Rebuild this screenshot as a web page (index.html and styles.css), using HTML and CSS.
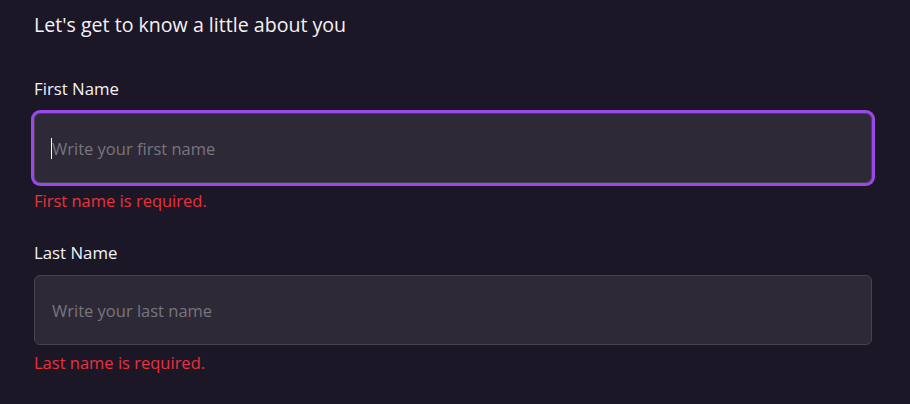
FILE: index.html
```
<!DOCTYPE html>
<html lang="en">
<head>
<meta charset="utf-8">
<title>About you</title>
<link rel="stylesheet" href="styles.css">
</head>
<body>
<form class="form">
  <h2 class="title">Let's get to know a little about you</h2>
  <div class="field">
    <label class="label" for="first">First Name</label>
    <div class="input-wrap focused">
      <span class="caret"></span>
      <input class="input" id="first" type="text" placeholder="Write your first name">
    </div>
    <p class="error">First name is required.</p>
  </div>
  <div class="field">
    <label class="label" for="last">Last Name</label>
    <div class="input-wrap">
      <input class="input" id="last" type="text" placeholder="Write your last name">
    </div>
    <p class="error">Last name is required.</p>
  </div>
</form>
</body>
</html>
```
FILE: styles.css
```
html, body {
  margin: 0;
  padding: 0;
  background: #1c1726;
  font-family: "Open Sans", "Lato", sans-serif;
}
.form {
  display: flex;
  flex-direction: column;
  padding: 13px 38px 0 34px;
}
.title {
  margin: 0 0 42px;
  font-size: 19.6px;
  font-weight: 400;
  line-height: 24px;
  color: #f4f2f7;
}
.field {
  display: flex;
  flex-direction: column;
  margin-bottom: 32px;
}
.label {
  font-size: 16.8px;
  line-height: 20px;
  color: #f4f2f7;
  margin-bottom: 14px;
}
.field + .field .label {
  margin-bottom: 12px;
}
.input-wrap {
  position: relative;
  height: 70px;
  box-sizing: border-box;
  border: 1px solid #48444e;
  border-radius: 6px;
  background: #2e2937;
  display: flex;
  align-items: center;
}
.input-wrap.focused {
  box-shadow: 0 0 0 3px #9a47ec;
}
.input {
  flex: 1;
  border: 0;
  outline: 0;
  background: transparent;
  font-family: inherit;
  font-size: 16.5px;
  color: #f4f2f7;
  padding: 0 0 0 17px;
  height: 100%;
}
.input::placeholder {
  color: #78757f;
}
.caret {
  position: absolute;
  left: 16px;
  top: 24px;
  width: 1px;
  height: 21px;
  background: #ffffff;
}
.error {
  margin: 8px 0 0;
  font-size: 16.5px;
  line-height: 20px;
  color: #e8323c;
}
```
